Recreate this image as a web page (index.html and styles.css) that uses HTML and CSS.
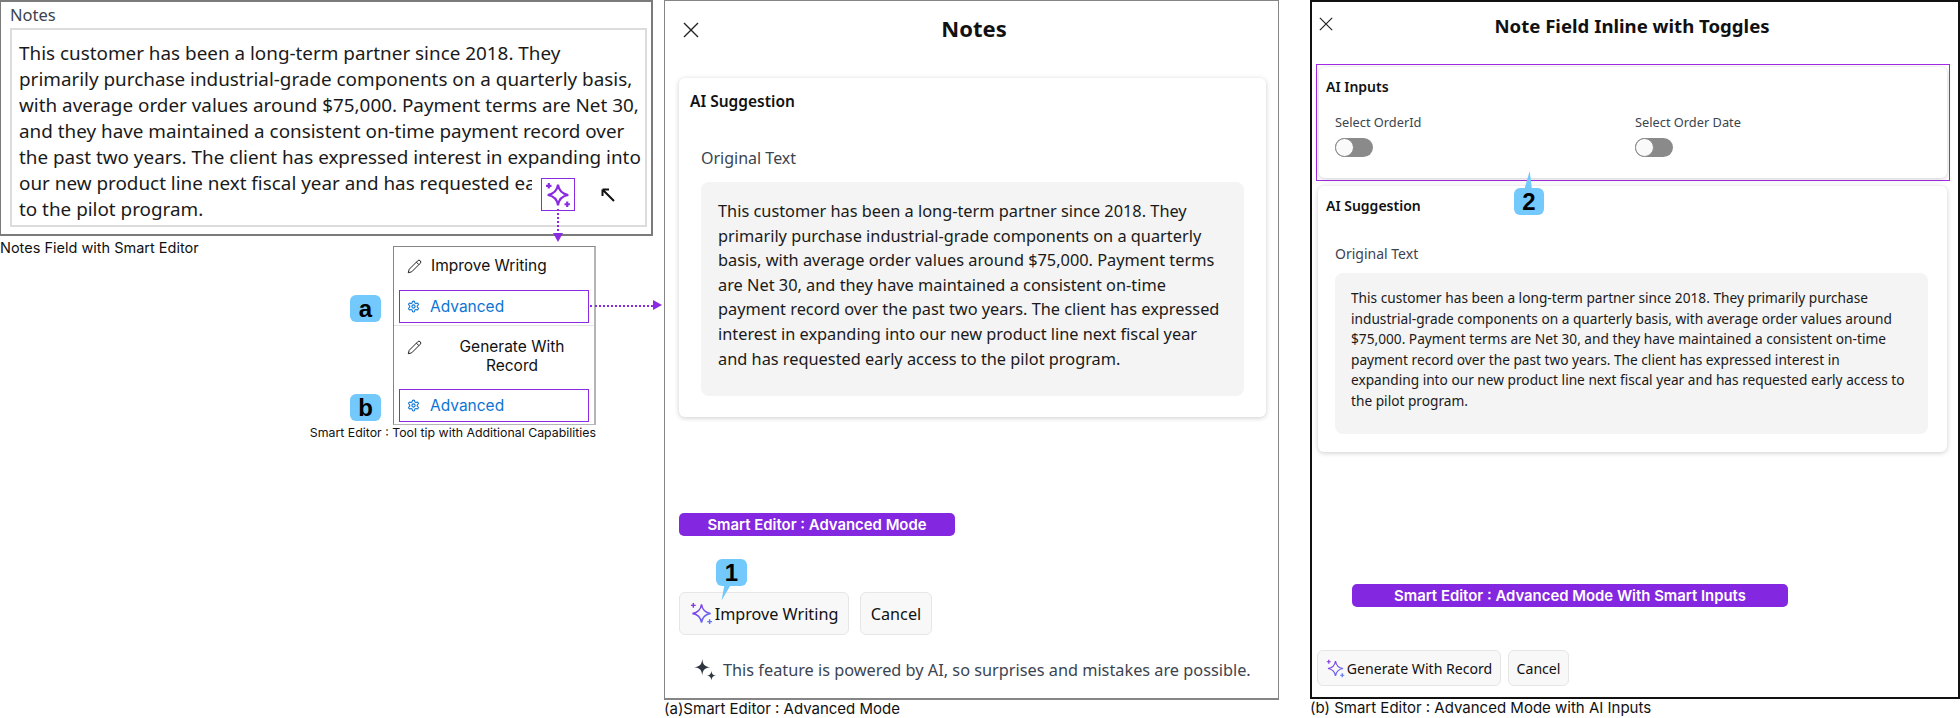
FILE: index.html
```html
<!DOCTYPE html>
<html lang="en">
  <head>
    <meta charset="UTF-8" />
    <title>Smart Editor</title>
    <link rel="stylesheet" href="styles.css">
  </head>
  <body>
    <svg class="defs" width="0" height="0">
      <defs>
        <linearGradient id="sparkGrad" x1="0" y1="0" x2="1" y2="1">
          <stop offset="0" stop-color="#8a2be2" />
          <stop offset="1" stop-color="#5b7cf5" />
        </linearGradient>
        <symbol id="spark" viewBox="0 0 24 24">
          <path d="M12 2.5C12.8 8 16 11.2 21.5 12C16 12.8 12.8 16 12 21.5C11.2 16 8 12.8 2.5 12C8 11.2 11.2 8 12 2.5Z" />
          <path d="M3.5 1v5M1 3.5h5M20.5 18v5M18 20.5h5" />
        </symbol>
        <symbol id="pencil" viewBox="0 0 24 24">
          <path d="M17 3a2.85 2.83 0 1 1 4 4L7.5 20.5 2 22l1.5-5.5Z" />
          <path d="m15 5 4 4" />
        </symbol>
        <symbol id="gear" viewBox="0 0 24 24">
          <path d="M12.22 2h-.44a2 2 0 0 0-2 2v.18a2 2 0 0 1-1 1.73l-.43.25a2 2 0 0 1-2 0l-.15-.08a2 2 0 0 0-2.73.73l-.22.38a2 2 0 0 0 .73 2.73l.15.1a2 2 0 0 1 1 1.72v.51a2 2 0 0 1-1 1.74l-.15.09a2 2 0 0 0-.73 2.73l.22.38a2 2 0 0 0 2.73.73l.15-.08a2 2 0 0 1 2 0l.43.25a2 2 0 0 1 1 1.73V20a2 2 0 0 0 2 2h.44a2 2 0 0 0 2-2v-.18a2 2 0 0 1 1-1.73l.43-.25a2 2 0 0 1 2 0l.15.08a2 2 0 0 0 2.73-.73l.22-.39a2 2 0 0 0-.73-2.73l-.15-.08a2 2 0 0 1-1-1.74v-.5a2 2 0 0 1 1-1.74l.15-.09a2 2 0 0 0 .73-2.73l-.22-.38a2 2 0 0 0-2.73-.73l-.15.08a2 2 0 0 1-2 0l-.43-.25a2 2 0 0 1-1-1.73V4a2 2 0 0 0-2-2z" />
          <circle cx="12" cy="12" r="3" />
        </symbol>
        <symbol id="close" viewBox="0 0 16 16">
          <path d="M1 1l14 14M15 1L1 15" />
        </symbol>
      </defs>
    </svg>

    <div class="page">
      <section class="col-field">
        <div class="field-panel">
          <div class="field-label">Notes</div>
          <div class="field-box">This customer has been a long-term partner since 2018. They<br>primarily purchase industrial-grade components on a quarterly basis, with average order values around $75,000. Payment terms are Net 30, and they have maintained a consistent on-time payment record over the past two years. The client has expressed interest in expanding into our new product line next fiscal year and has requested early access to the pilot program.</div>
          <div class="field-cover">
            <div class="spark-box">
              <svg class="spark-icon"><use href="#spark" /></svg>
            </div>
            <svg class="cursor-icon" viewBox="0 0 14 14"><path d="M1.5 1.5L13 13M1.5 1.5h6.5M1.5 1.5V8" /></svg>
          </div>
          <div class="arrow-down"></div>
        </div>
        <div class="caption caption-field">Notes Field with Smart Editor</div>

        <div class="menu">
          <div class="menu-item">
            <svg class="pencil-icon"><use href="#pencil" /></svg>
            <span>Improve Writing</span>
          </div>
          <div class="menu-link">
            <svg class="gear-icon"><use href="#gear" /></svg>
            <span>Advanced</span>
            <div class="arrow-right"></div>
            <div class="badge badge-side">a</div>
          </div>
          <div class="menu-divider"></div>
          <div class="menu-item menu-item-tall">
            <svg class="pencil-icon"><use href="#pencil" /></svg>
            <span class="menu-centered">Generate With Record</span>
          </div>
          <div class="menu-link">
            <svg class="gear-icon"><use href="#gear" /></svg>
            <span>Advanced</span>
            <div class="badge badge-side">b</div>
          </div>
        </div>
        <div class="caption caption-menu">Smart Editor : Tool tip with Additional Capabilities</div>
      </section>

      <section class="col-mode">
        <div class="dialog dialog-mode">
          <header class="dialog-head">
            <svg class="close-icon"><use href="#close" /></svg>
            <h2>Notes</h2>
          </header>
          <div class="card card-mode">
            <h3>AI Suggestion</h3>
            <div class="orig-label">Original Text</div>
            <div class="orig-text">This customer has been a long-term partner since 2018. They primarily purchase industrial-grade components on a quarterly basis, with average order values around $75,000. Payment terms are Net 30, and they have maintained a consistent on-time payment record over the past two years. The client has expressed interest in expanding into our new product line next fiscal year and has requested early access to the pilot program.</div>
          </div>
          <div class="pill pill-mode">Smart Editor : Advanced Mode</div>
          <div class="actions">
            <button class="btn"><svg class="btn-spark"><use href="#spark" /></svg>Improve Writing</button>
            <button class="btn btn-cancel">Cancel</button>
            <div class="badge badge-one">1</div>
            <svg class="tail tail-one" viewBox="0 0 14 24"><path d="M4 0L0 22L13 0Z" /></svg>
          </div>
          <div class="ai-note">
            <svg class="ai-icon" viewBox="0 0 24 24">
              <path d="M9 0C9.6 6 11.5 8.4 18 9C11.5 9.6 9.6 12 9 18C8.4 12 6.5 9.6 0 9C6.5 8.4 8.4 6 9 0Z" />
              <path d="M19 13C19.3 16 20.5 17.7 24 18C20.5 18.3 19.3 20 19 23.5C18.7 20 17.5 18.3 14 18C17.5 17.7 18.7 16 19 13Z" />
            </svg>
            This feature is powered by AI, so surprises and mistakes are possible.
          </div>
        </div>
        <div class="caption caption-dialog">(a)Smart Editor : Advanced Mode</div>
      </section>

      <section class="col-inputs">
        <div class="dialog dialog-inputs">
          <header class="dialog-head dialog-head-small">
            <svg class="close-icon"><use href="#close" /></svg>
            <h2>Note Field Inline with Toggles</h2>
          </header>
          <div class="inputs-frame">
            <div class="card card-inputs">
              <h3>AI Inputs</h3>
              <div class="toggle-row">
                <div class="toggle-field">
                  <div class="toggle-label">Select OrderId</div>
                  <div class="toggle"></div>
                </div>
                <div class="toggle-field">
                  <div class="toggle-label">Select Order Date</div>
                  <div class="toggle"></div>
                </div>
              </div>
            </div>
            <svg class="tail tail-two" viewBox="0 0 10 24"><path d="M7 0L0 24H10Z" /></svg>
            <div class="badge badge-two">2</div>
          </div>
          <div class="card card-suggest">
            <h3>AI Suggestion</h3>
            <div class="orig-label">Original Text</div>
            <div class="orig-text">This customer has been a long-term partner since 2018. They primarily purchase industrial-grade components on a quarterly basis, with average order values around $75,000. Payment terms are Net 30, and they have maintained a consistent on-time payment record over the past two years. The client has expressed interest in<br>expanding into our new product line next fiscal year and has requested early access to the pilot program.</div>
          </div>
          <div class="pill pill-inputs">Smart Editor : Advanced Mode With Smart Inputs</div>
          <div class="actions">
            <button class="btn"><svg class="btn-spark"><use href="#spark" /></svg>Generate With Record</button>
            <button class="btn btn-cancel">Cancel</button>
          </div>
        </div>
        <div class="caption caption-dialog">(b) Smart Editor : Advanced Mode with AI Inputs</div>
      </section>
    </div>
  </body>
</html>
```

FILE: styles.css
```css
html, body {
  margin: 0;
  padding: 0;
  background: #fff;
}
body {
  font-family: "Noto Sans", sans-serif;
  color: #111;
  width: 1960px;
  height: 718px;
  overflow: hidden;
}
.defs {
  position: absolute;
}
.page {
  display: flex;
  align-items: flex-start;
  height: 718px;
}
h2, h3 {
  margin: 0;
}
svg {
  display: block;
}

/* left column */
.col-field {
  width: 664px;
  flex: none;
}
.field-panel {
  position: relative;
  box-sizing: border-box;
  width: 653px;
  height: 236px;
  border: 2px solid #7b7b7b;
  border-left-width: 1px;
  padding: 3px 4px 0 9px;
}
.field-label {
  font-size: 16.5px;
  line-height: 19px;
  color: #3b4450;
  margin-bottom: 4px;
}
.field-box {
  box-sizing: border-box;
  height: 199px;
  border: 2px solid #dcdcdc;
  padding: 10px 2px 0 7px;
  font-size: 18.86px;
  line-height: 26px;
  color: #1a1a1a;
}
.field-cover {
  position: absolute;
  left: 531px;
  top: 170px;
  width: 108px;
  height: 40px;
  background: #fff;
}
.spark-box {
  position: absolute;
  left: 9px;
  top: 6px;
  box-sizing: border-box;
  width: 34px;
  height: 33px;
  border: 1px solid #8a2be2;
  background: #fff;
  display: flex;
  align-items: center;
  justify-content: center;
}
.spark-icon {
  width: 26px;
  height: 26px;
  fill: none;
  stroke: #8a2be2;
  stroke-width: 2;
}
.cursor-icon {
  position: absolute;
  left: 69px;
  top: 16px;
  width: 14px;
  height: 14px;
  fill: none;
  stroke: #111;
  stroke-width: 2;
}
.arrow-down {
  position: absolute;
  left: 556px;
  top: 207px;
  height: 26px;
  border-left: 2px dotted #8a2be2;
}
.arrow-down::after {
  content: "";
  position: absolute;
  left: -6.5px;
  top: 24px;
  border-left: 5.5px solid transparent;
  border-right: 5.5px solid transparent;
  border-top: 9px solid #8a2be2;
}
.caption {
  font-family: Inter, sans-serif;
  font-size: 14px;
  line-height: 18px;
  color: #111;
}
.caption-field {
  font-size: 14.5px;
  margin-top: 3px;
}
.caption-dialog {
  font-size: 15px;
}
.menu {
  box-sizing: border-box;
  width: 203px;
  height: 179px;
  margin: -11px 0 0 393px;
  border: 1px solid #858585;
  border-right: 2px solid #b5b5b5;
  border-bottom-color: #b5b5b5;
  padding: 0 5px;
  font-family: Inter, sans-serif;
  font-size: 15.5px;
  position: relative;
}
.menu-item {
  display: flex;
  align-items: flex-start;
  gap: 9px;
  height: 43px;
  padding: 9px 0 0 8px;
  box-sizing: border-box;
  line-height: 19px;
}
.menu-item-tall {
  height: 63px;
  padding-top: 11px;
}
.menu-centered {
  flex: 1;
  text-align: center;
  padding: 0 12px 0 16px;
}
.pencil-icon {
  width: 15px;
  height: 17px;
  margin-top: 2px;
  fill: none;
  stroke: #222;
  stroke-width: 1.6;
}
.menu-link {
  position: relative;
  box-sizing: border-box;
  height: 33px;
  display: flex;
  align-items: center;
  gap: 10px;
  border: 1px solid #8a2be2;
  padding-left: 7px;
  color: #0b74d6;
}
.menu-divider {
  height: 1px;
  background: #e4e4e4;
  margin: 2px -5px 0;
}
.gear-icon {
  width: 13px;
  height: 13px;
  fill: none;
  stroke: #0b74d6;
  stroke-width: 2;
}
.arrow-right {
  position: absolute;
  left: 190px;
  top: 14px;
  width: 63px;
  border-top: 2px dotted #8a2be2;
}
.arrow-right::after {
  content: "";
  position: absolute;
  right: -9px;
  top: -7px;
  border-top: 5.5px solid transparent;
  border-bottom: 5.5px solid transparent;
  border-left: 9px solid #8a2be2;
}
.badge {
  position: absolute;
  display: flex;
  align-items: center;
  justify-content: center;
  background: #73c9fb;
  border-radius: 6px;
  font-family: "Liberation Sans", sans-serif;
  font-weight: 700;
  font-size: 24px;
  color: #000;
}
.badge-side {
  left: -50px;
  top: 4px;
  width: 31px;
  height: 27px;
}
.caption-menu {
  width: 596px;
  text-align: right;
  font-size: 12.35px;
  margin-top: -1px;
}

/* dialogs */
.col-mode {
  width: 646px;
  flex: none;
}
.col-inputs {
  width: 650px;
  flex: none;
}
.dialog {
  position: relative;
  box-sizing: border-box;
  height: 700px;
  border: 1px solid #858585;
  border-bottom-width: 2px;
}
.dialog-mode {
  width: 615px;
  padding: 0 12px 0 14px;
}
.dialog-inputs {
  height: 699px;
  border: 2px solid #111;
  padding: 0 4px 0 4px;
}
.dialog-head {
  position: relative;
  height: 77px;
  text-align: center;
}
.dialog-head h2 {
  padding-top: 11px;
  font-size: 22px;
  line-height: 32px;
  font-weight: 700;
  margin-left: 3px;
}
.dialog-head-small {
  height: 62px;
}
.dialog-head-small h2 {
  padding-top: 10px;
  font-size: 18.6px;
  line-height: 28px;
  margin: 0 6px 0 0;
}
.close-icon {
  position: absolute;
  left: 4px;
  top: 21px;
  width: 16px;
  height: 16px;
  fill: none;
  stroke: #222;
  stroke-width: 1.4;
}
.dialog-head-small .close-icon {
  left: 3px;
  top: 15px;
  width: 14px;
  height: 14px;
}
.card {
  background: #fff;
  border-radius: 6px;
  box-shadow: 0 1px 5px rgba(0, 0, 0, 0.2);
}
.card h3 {
  font-size: 15.5px;
  line-height: 22px;
  font-weight: 600;
}
.card-mode {
  box-sizing: border-box;
  height: 339px;
  padding: 12px 22px 0 11px;
}
.orig-label {
  color: #3b4450;
}
.card-mode .orig-label {
  margin: 34px 0 0 11px;
  font-size: 16px;
  line-height: 24px;
}
.orig-text {
  background: #f4f4f4;
  border-radius: 8px;
  color: #1a1a1a;
}
.card-mode .orig-text {
  box-sizing: border-box;
  height: 214px;
  margin: 12px 0 0 11px;
  padding: 17px 17px 0;
  font-size: 16.33px;
  line-height: 24.6px;
}
.pill {
  display: flex;
  align-items: center;
  justify-content: center;
  height: 23px;
  background: #8427e0;
  border-radius: 5px;
  font-family: Inter, sans-serif;
  font-weight: 600;
  font-size: 14.9px;
  color: #fff;
}
.pill-mode {
  width: 276px;
  margin-top: 96px;
}
.actions {
  position: relative;
  display: flex;
  gap: 11px;
  margin-top: 56px;
}
.btn {
  display: flex;
  align-items: center;
  justify-content: center;
  box-sizing: border-box;
  height: 43px;
  width: 170px;
  padding: 0;
  background: #f8f8f8;
  border: 1px solid #e6e6e6;
  border-radius: 6px;
  font-family: "Noto Sans", sans-serif;
  font-size: 16.2px;
  color: #111;
}
.btn-cancel {
  width: 72px;
}
.btn-spark {
  width: 23px;
  height: 23px;
  margin-right: 2px;
  fill: none;
  stroke: url(#sparkGrad);
  stroke-width: 1.5;
}
.badge-one {
  left: 37px;
  top: -33px;
  width: 31px;
  height: 27px;
}
.tail {
  position: absolute;
  fill: #73c9fb;
}
.tail-one {
  left: 41px;
  top: -7px;
  width: 13px;
  height: 17px;
}
.ai-note {
  display: flex;
  align-items: center;
  gap: 7px;
  margin: 24px 0 0 15px;
  font-size: 16.3px;
  line-height: 22px;
  color: #3b4450;
}
.ai-icon {
  width: 22px;
  height: 22px;
  fill: #2f3640;
}

/* inline toggles */
.inputs-frame {
  position: relative;
  box-sizing: border-box;
  width: 634px;
  height: 117px;
  border: 1px solid #a32ae6;
  padding: 2px;
}
.card-inputs {
  box-sizing: border-box;
  height: 111px;
  padding: 9px 9px 0 7px;
}
.card-inputs h3 {
  font-size: 14px;
}
.toggle-row {
  display: flex;
  margin: 15px 0 0 9px;
}
.toggle-field {
  width: 300px;
}
.toggle-label {
  font-size: 12.8px;
  line-height: 18px;
  color: #3b4450;
}
.toggle {
  position: relative;
  box-sizing: border-box;
  width: 38px;
  height: 19px;
  margin-top: 7px;
  background: #8a8a8a;
  border-radius: 10px;
}
.toggle::after {
  content: "";
  position: absolute;
  left: 0;
  top: 0;
  box-sizing: border-box;
  width: 19px;
  height: 19px;
  background: #fafafa;
  border: 1px solid #8a8a8a;
  border-radius: 50%;
}
.tail-two {
  left: 206px;
  top: 106px;
  width: 10px;
  height: 20px;
}
.badge-two {
  left: 197px;
  top: 123px;
  width: 30px;
  height: 27px;
}
.card-suggest {
  box-sizing: border-box;
  width: 629px;
  height: 266px;
  margin: 5px 0 0 2px;
  padding: 9px 19px 0 8px;
}
.card-suggest h3 {
  font-size: 14px;
}
.card-suggest .orig-label {
  margin: 27px 0 0 9px;
  font-size: 14px;
  line-height: 20px;
}
.card-suggest .orig-text {
  box-sizing: border-box;
  height: 161px;
  margin: 9px 0 0 9px;
  padding: 15px 16px 0;
  font-size: 13.7px;
  line-height: 20.6px;
}
.pill-inputs {
  width: 436px;
  margin: 132px 0 0 36px;
}
.dialog-inputs .actions {
  gap: 7px;
  margin: 43px 0 0 1px;
}
.dialog-inputs .btn {
  width: 184px;
  height: 36px;
  font-size: 14.1px;
}
.dialog-inputs .btn-cancel {
  width: 61px;
}
.dialog-inputs .btn-spark {
  width: 19px;
  height: 19px;
}
```
